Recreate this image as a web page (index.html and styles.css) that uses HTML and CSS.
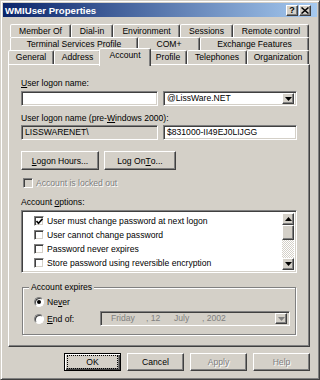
FILE: index.html
```html
<!DOCTYPE html>
<html>
<head>
	<title>WMIUser Properties</title>
	<meta http-equiv="Content-Type" content="text/html;charset=utf-8">
	<link rel="stylesheet" href="styles.css">
</head>
<body>
	<div class="window">
		<div class="titlebar">
			<span class="title">WMIUser Properties</span>
			<span class="cbtn cbtn-help">?</span>
			<span class="cbtn cbtn-close">
				<svg width="8" height="7" viewBox="0 0 8 7"><path d="M0.5 0.5 L7.5 6.5 M7.5 0.5 L0.5 6.5" stroke="#000" stroke-width="1.5"/></svg>
			</span>
		</div>
		<div class="body">
			<div class="tabs">
				<div class="tabrow row-back">
					<div class="tab t-member">Member Of</div>
					<div class="tab t-dial">Dial-in</div>
					<div class="tab t-env">Environment</div>
					<div class="tab t-sess">Sessions</div>
					<div class="tab t-remote">Remote control</div>
				</div>
				<div class="tabrow row-back">
					<div class="tab t-ts">Terminal Services Profile</div>
					<div class="tab t-com">COM+</div>
					<div class="tab t-exch">Exchange Features</div>
				</div>
				<div class="tabrow row-front">
					<div class="tab t-gen">General</div>
					<div class="tab t-addr">Address</div>
					<div class="tab t-acc current">Account</div>
					<div class="tab t-prof">Profile</div>
					<div class="tab t-tel">Telephones</div>
					<div class="tab t-org">Organization</div>
				</div>
			</div>

			<div class="panel">
				<div class="label lbl-logon"><u>U</u>ser logon name:</div>
				<div class="field-row">
					<div class="edit w-left"></div>
					<div class="edit combo w-right">
						<span class="combo-text">@LissWare.NET</span>
						<span class="drop-btn"><svg width="7" height="4" viewBox="0 0 7 4"><polygon points="0,0 7,0 3.5,4" fill="#000"/></svg></span>
					</div>
				</div>
				<div class="label lbl-pre">User logon name (pre-<u>W</u>indows 2000):</div>
				<div class="field-row row-pre">
					<div class="edit readonly w-left">LISSWARENET\</div>
					<div class="edit w-right">$831000-II49EJ0LIJGG</div>
				</div>
				<div class="btn-row">
					<div class="btn btn-hours"><u>L</u>ogon Hours...</div>
					<div class="btn btn-logto">Log On <u>T</u>o...</div>
				</div>
				<div class="check-line disabled"><span class="checkbox grayed"></span>Account is locked out</div>
				<div class="label lbl-options">Account <u>o</u>ptions:</div>
				<div class="listbox">
					<div class="list-items">
						<div class="list-item"><span class="checkbox"><svg width="7" height="7" viewBox="0 0 7 7"><path d="M0.5 3 L2.5 5.2 L6.5 0.8" stroke="#000" stroke-width="1.6" fill="none"/></svg></span>User must change password at next logon</div>
						<div class="list-item"><span class="checkbox"></span>User cannot change password</div>
						<div class="list-item"><span class="checkbox"></span>Password never expires</div>
						<div class="list-item"><span class="checkbox"></span>Store password using reversible encryption</div>
					</div>
					<div class="scrollbar">
						<span class="sb-btn"><svg width="7" height="4" viewBox="0 0 7 4"><polygon points="0,4 7,4 3.5,0" fill="#000"/></svg></span>
						<span class="sb-thumb"></span>
						<span class="sb-track"></span>
						<span class="sb-btn"><svg width="7" height="4" viewBox="0 0 7 4"><polygon points="0,0 7,0 3.5,4" fill="#000"/></svg></span>
					</div>
				</div>
				<div class="group">
					<div class="group-title">Account expires</div>
					<div class="radio-line"><span class="radio on"></span>Ne<u>v</u>er</div>
					<div class="radio-line line-end">
						<span class="radio"></span>
						<span class="radio-text"><u>E</u>nd of:</span>
						<div class="edit datepick">
							<span class="d-day">Friday</span>
							<span class="d-num">, 12</span>
							<span class="d-month">July</span>
							<span class="d-year">, 2002</span>
							<span class="drop-btn off"><svg width="7" height="4" viewBox="0 0 7 4"><polygon points="0,0 7,0 3.5,4" fill="#808080"/></svg></span>
						</div>
					</div>
				</div>
			</div>

			<div class="dlg-buttons">
				<div class="btn btn-dlg default"><span class="focus">OK</span></div>
				<div class="btn btn-dlg">Cancel</div>
				<div class="btn btn-dlg disabled">Apply</div>
				<div class="btn btn-dlg disabled">Help</div>
			</div>
		</div>
	</div>
</body>
</html>
```

FILE: styles.css
```css
body{margin:0;background:#d4d0c8;font-family:"Liberation Sans",Arial,sans-serif;font-size:8.6px;color:#000;}
u{text-decoration:underline;text-underline-offset:1px;}

/* window frame */
.window{box-sizing:border-box;width:320px;height:380px;padding:2px;border:1px solid;border-color:#d4d0c8 #404040 #404040 #d4d0c8;box-shadow:inset 1px 1px #fff,inset -1px -1px #808080;display:flex;flex-direction:column;}
.titlebar{height:14px;display:flex;align-items:center;padding:0 6px 0 2px;background:linear-gradient(to right,#0a246a,#a6caf0);}
.title{flex:1;color:#fff;font-weight:bold;font-size:9.6px;}
.cbtn{box-sizing:border-box;width:12px;height:11px;background:#d4d0c8;border:1px solid;border-color:#fff #404040 #404040 #fff;box-shadow:inset -1px -1px #808080;display:flex;align-items:center;justify-content:center;font-weight:bold;font-size:9px;line-height:9px;}
.cbtn-close{margin-left:1px;}

.body{flex:1;padding:7px 0 0 5px;display:flex;flex-direction:column;}

/* tabs */
.tabs{display:flex;flex-direction:column;}
.tabrow{display:flex;height:13px;}
.row-back{margin-left:2px;}
.row-front{height:14px;}
.tab{box-sizing:border-box;height:13px;border:1px solid;border-bottom:0;border-color:#fff #404040 transparent #fff;box-shadow:inset -1px 0 #808080;border-radius:2px 2px 0 0;text-align:center;line-height:12px;white-space:nowrap;background:#d4d0c8;}
.row-front .tab{height:14px;line-height:13px;}
.t-member{width:61px;}
.t-dial{width:42px;}
.t-env{width:67px;}
.t-sess{width:53px;}
.t-remote{width:76px;}
.t-ts{width:128px;}
.t-com{width:62px;}
.t-exch{width:109px;}
.t-gen{width:46px;}
.t-addr{width:47px;}
.t-acc{width:48px;}
.t-prof{width:38px;}
.t-tel{width:60px;}
.t-org{width:62px;}
.row-front .current{position:relative;z-index:1;width:52px;height:18px;margin:-2px -2px -2px;line-height:13px;}

/* page */
.panel{box-sizing:border-box;width:302px;height:283px;padding:0 12px;border:1px solid;border-color:#fff #404040 #404040 #fff;box-shadow:inset -1px -1px #808080;display:flex;flex-direction:column;}
.label{line-height:10px;white-space:nowrap;}
.lbl-logon{margin-top:13px;}
.lbl-pre{margin-top:7px;}
.lbl-options{margin-top:9px;}
.field-row{display:flex;gap:5px;margin-top:3px;}
.row-pre{margin-top:2px;}
.edit{box-sizing:border-box;height:15px;background:#fff;border:1px solid;border-color:#808080 #fff #fff #808080;box-shadow:inset 1px 1px #404040,inset -1px -1px #d4d0c8;padding:0 3px;line-height:13px;white-space:nowrap;overflow:hidden;}
.w-left{width:138px;}
.w-right{width:135px;}
.readonly{background:#d4d0c8;}
.combo{display:flex;padding:0 2px 0 3px;}
.combo-text{flex:1;}
.drop-btn{box-sizing:border-box;width:12px;height:11px;margin-top:1px;background:#d4d0c8;border:1px solid;border-color:#fff #404040 #404040 #fff;box-shadow:inset -1px -1px #808080;display:flex;align-items:center;justify-content:center;}

.btn{box-sizing:border-box;height:19px;background:#d4d0c8;border:1px solid;border-color:#fff #404040 #404040 #fff;box-shadow:inset -1px -1px #808080;display:flex;align-items:center;justify-content:center;white-space:nowrap;}
.btn-row{display:flex;gap:5px;margin-top:11px;}
.btn-hours{width:78px;}
.btn-logto{width:72px;}

.checkbox{box-sizing:border-box;width:10px;height:10px;flex:none;background:#fff;border:1px solid;border-color:#808080 #fff #fff #808080;box-shadow:inset 1px 1px #404040,inset -1px -1px #d4d0c8;display:flex;align-items:center;justify-content:center;margin-right:3px;}
.checkbox.grayed{background:#d4d0c8;}
.check-line{display:flex;align-items:center;height:10px;margin-top:8px;padding-left:2px;}
.disabled{color:#808080;text-shadow:1px 1px #fff;}

.listbox{box-sizing:border-box;height:63px;margin-top:3px;background:#fff;border:1px solid;border-color:#808080 #fff #fff #808080;box-shadow:inset 1px 1px #404040,inset -1px -1px #d4d0c8;padding:2px;display:flex;}
.list-items{flex:1;padding-top:1px;overflow:hidden;}
.list-item{height:14px;display:flex;align-items:center;padding-left:10px;white-space:nowrap;}
.scrollbar{width:12px;display:flex;flex-direction:column;}
.sb-btn,.sb-thumb{box-sizing:border-box;height:12px;flex:none;background:#d4d0c8;border:1px solid;border-color:#fff #404040 #404040 #fff;box-shadow:inset -1px -1px #808080;display:flex;align-items:center;justify-content:center;}
.sb-thumb{height:15px;}
.sb-track{flex:1;background:repeating-conic-gradient(#fff 0 25%,#d4d0c8 0 50%) 0 0/2px 2px;}

.group{margin:14px 1px 0;border:1px solid #808080;box-shadow:inset 1px 1px #fff,1px 1px #fff;padding:0 0 8px 11px;display:flex;flex-direction:column;}
.group-title{align-self:flex-start;margin:-6px 0 0 -5px;padding:0 2px;background:#d4d0c8;line-height:10px;}
.radio-line{display:flex;align-items:center;height:12px;margin-top:4px;}
.line-end{height:15px;margin-top:3px;}
.radio{box-sizing:border-box;width:10px;height:10px;flex:none;border-radius:50%;background:#fff;border:1px solid;border-color:#808080 #fff #fff #808080;box-shadow:inset 1px 1px #404040;margin-right:3px;display:flex;align-items:center;justify-content:center;}
.radio.on::after{content:"";width:4px;height:4px;border-radius:50%;background:#000;}
.radio-text{width:53px;}
.datepick{width:190px;background:#d4d0c8;color:#808080;display:flex;padding:0 2px 0 10px;}
.d-day{width:35px;}
.d-num,.d-month{width:28px;}
.d-year{flex:1;}
.drop-btn.off{margin-top:1px;}

.dlg-buttons{width:302px;display:flex;justify-content:flex-end;gap:6px;margin-top:6px;}
.btn-dlg{width:57px;height:18px;}
.btn-dlg.default{border-color:#000;box-shadow:inset 1px 1px #fff,inset -1px -1px #404040,inset -2px -2px #808080;}
.focus{box-sizing:border-box;width:51px;height:14px;border:1px dotted #000;display:flex;align-items:center;justify-content:center;}
```
